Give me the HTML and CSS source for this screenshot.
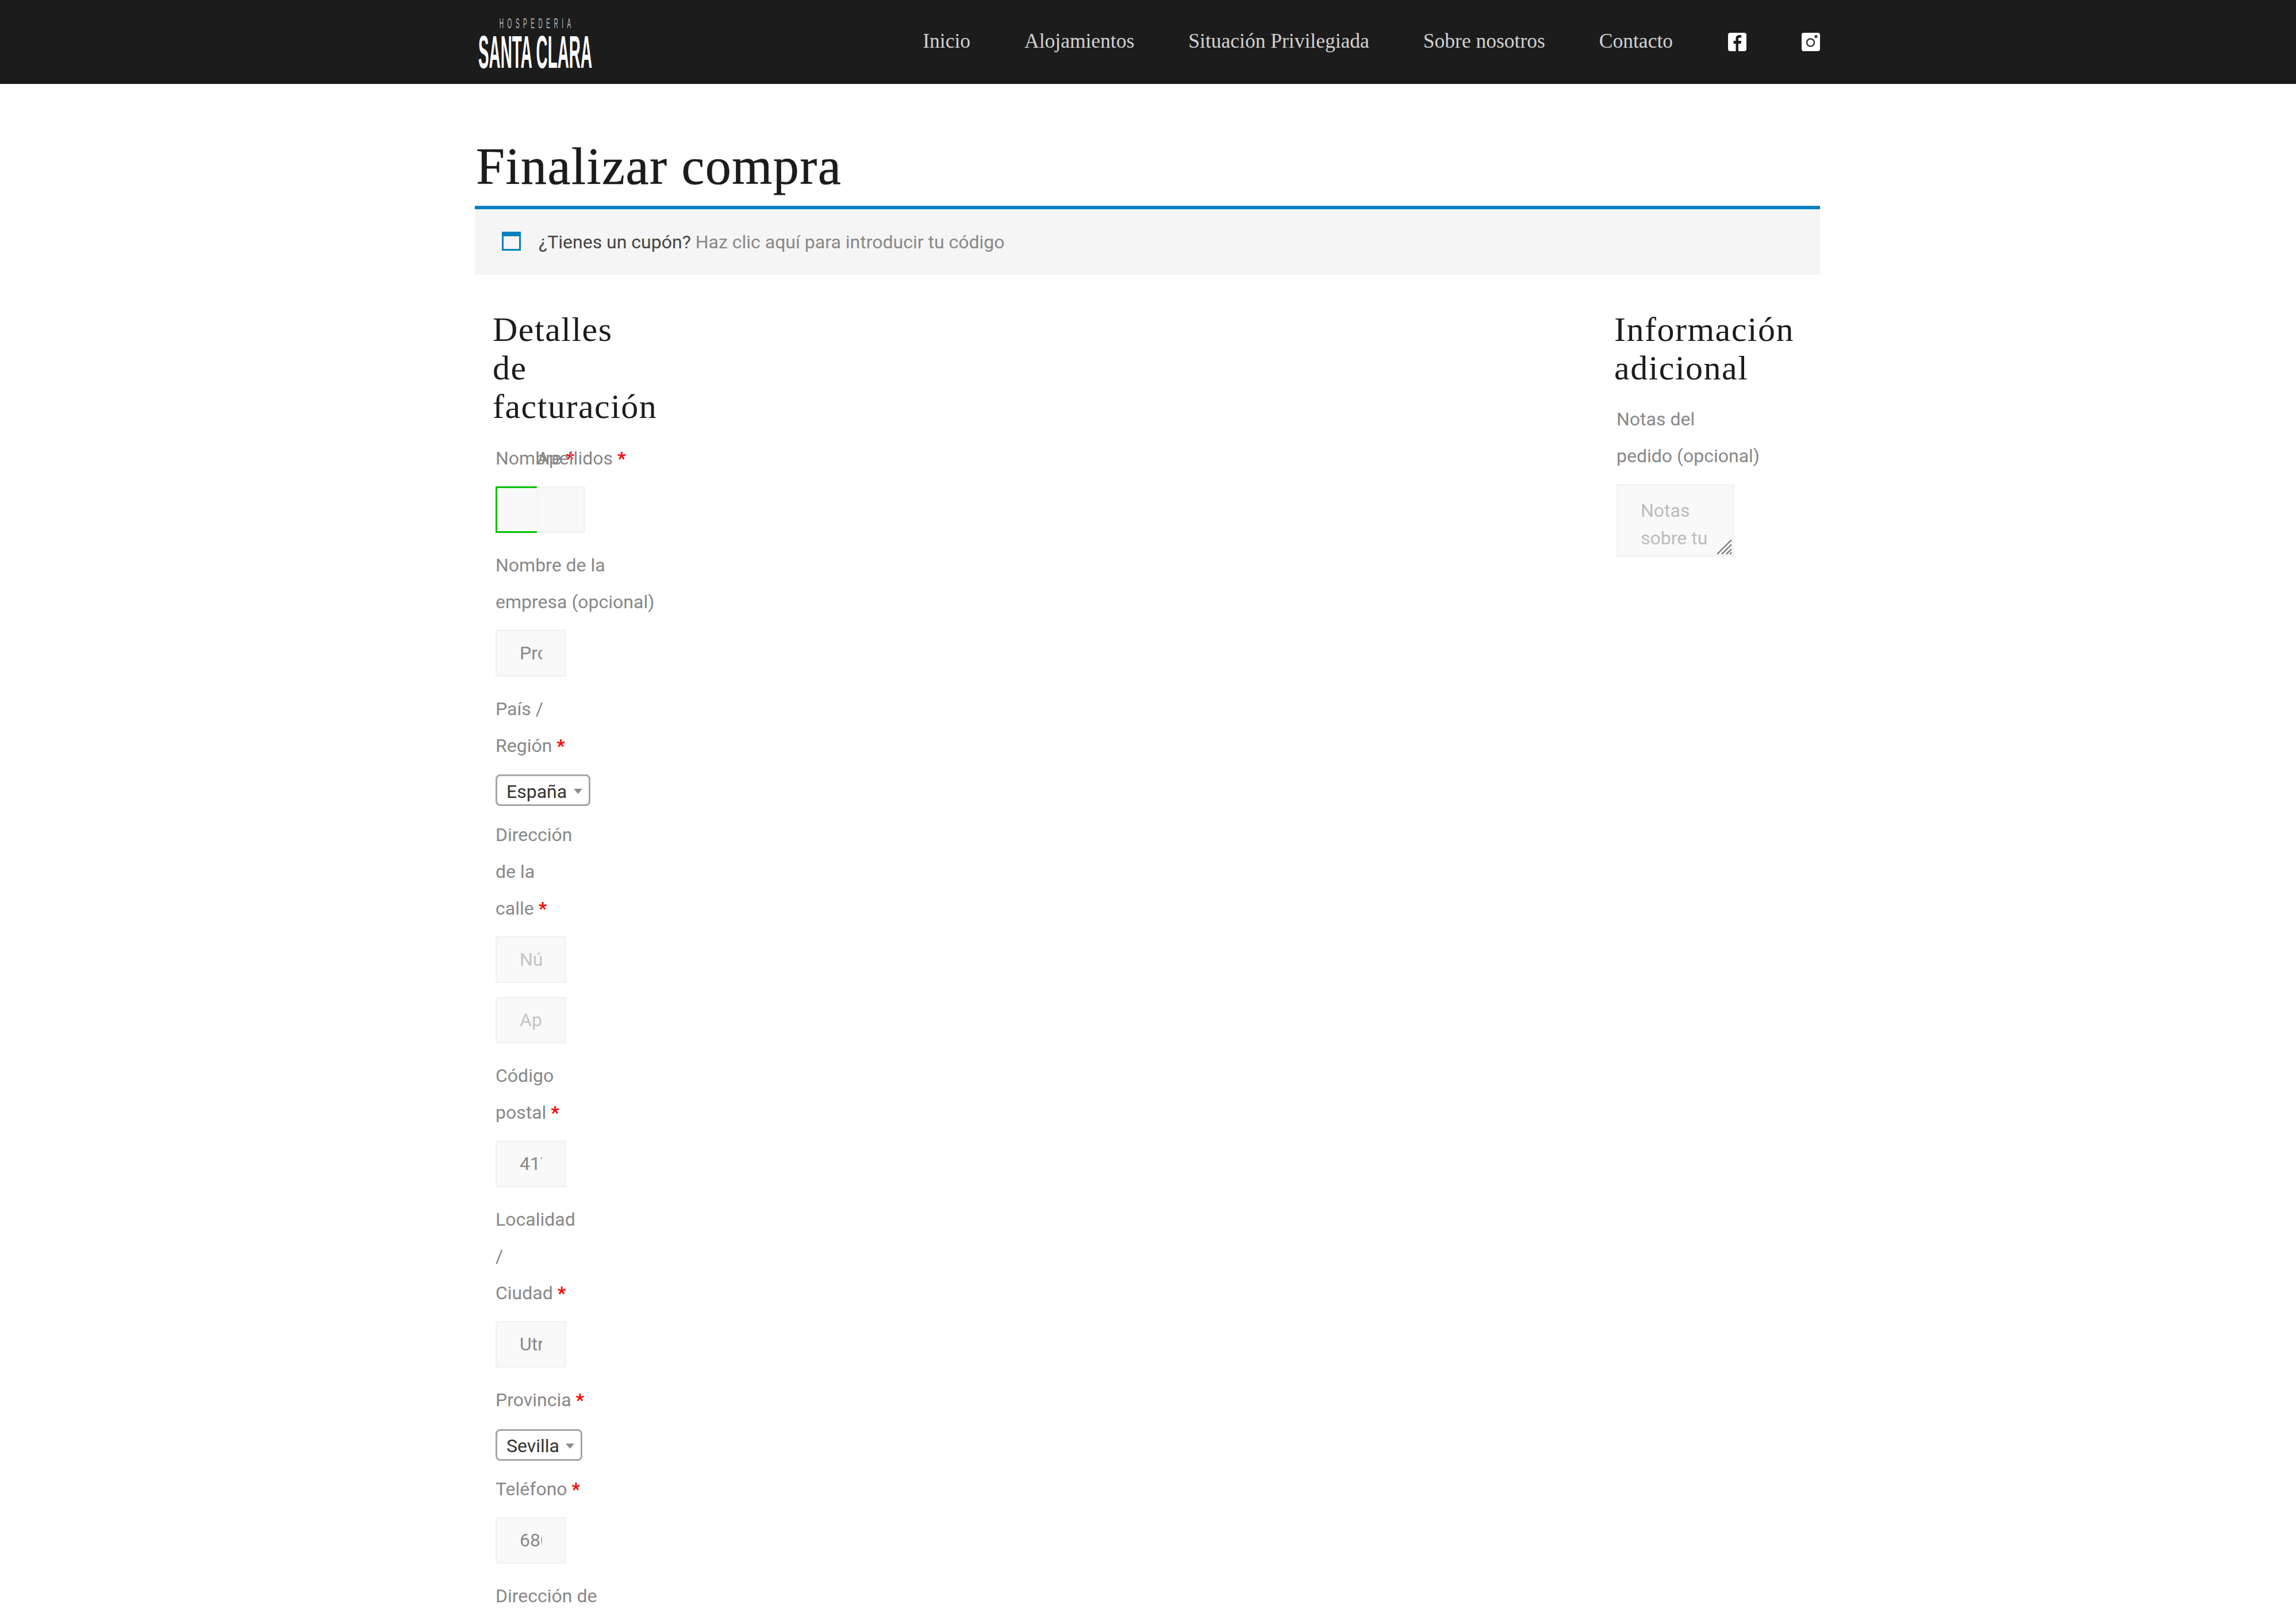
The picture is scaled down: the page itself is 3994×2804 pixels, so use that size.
FILE: index.html
```html
<!DOCTYPE html>
<html lang="es">
<head>
<meta charset="utf-8">
<title>Finalizar compra</title>
<link rel="stylesheet" href="styles.css">
</head>
<body>
<div class="page">
  <header class="topbar">
    <div class="wrap topbar-inner">
      <svg class="logo" width="210" height="90" viewBox="0 0 210 90" role="img" aria-label="Hospedería Santa Clara">
        <text class="logo-small" transform="scale(.42 1)" x="102" y="20" textLength="296" lengthAdjust="spacing">HOSPEDERIA</text>
        <text class="logo-big" x="6" y="89" textLength="198" lengthAdjust="spacingAndGlyphs">SANTA CLARA</text>
      </svg>
      <nav class="nav">
        <a class="nav-link">Inicio</a>
        <a class="nav-link">Alojamientos</a>
        <a class="nav-link">Situación Privilegiada</a>
        <a class="nav-link">Sobre nosotros</a>
        <a class="nav-link nav-link-last">Contacto</a>
        <svg class="social social-fb" width="32" height="32" viewBox="0 0 32 32" aria-label="Facebook"><rect width="32" height="32" rx="4" fill="#fff"/><path d="M18 32V19h4.400l.7-5H18v-3c0-1.500.6-2.400 2.500-2.400H23.200V4.200C22.400 4.100 21 4 19.600 4 16 4 13.500 6.200 13.500 10.300V14H9.500v5h4v13z" fill="#1c1c1c"/></svg>
        <svg class="social" width="32" height="32" viewBox="0 0 32 32" aria-label="Instagram"><rect width="32" height="32" rx="4" fill="#fff"/><circle cx="15.500" cy="17" r="6.500" fill="none" stroke="#3a3a3a" stroke-width="2.600"/><circle cx="25" cy="6.500" r="2.600" fill="#3a3a3a"/></svg>
      </nav>
    </div>
  </header>

  <main class="wrap">
    <h1 class="title">Finalizar compra</h1>
    <div class="notice">
      <span class="notice-icon"></span>
      <p class="notice-text">¿Tienes un cupón? <a class="notice-link">Haz clic aquí para introducir tu código</a></p>
    </div>

    <div class="columns">
      <section class="billing">
        <h2 class="section-title">Detalles<br>de<br>facturación</h2>

        <div class="name-row">
          <div class="field name-first">
            <label class="label nowrap">Nombre <abbr class="req">*</abbr></label>
            <input class="input input-valid" type="text">
          </div>
          <div class="field name-last">
            <label class="label nowrap">Apellidos <abbr class="req">*</abbr></label>
            <input class="input" type="text">
          </div>
        </div>

        <div class="field">
          <label class="label">Nombre de la<br>empresa (opcional)</label>
          <input class="input input-short" type="text" value="Proyecto">
        </div>

        <div class="field field-select">
          <label class="label label-select">País /<br>Región <abbr class="req">*</abbr></label>
          <div class="select select-country">España<svg class="caret" width="15" height="9" viewBox="0 0 15 9"><path d="M0 0h15L7.500 9z" fill="#8c8c8c"/></svg></div>
        </div>

        <div class="field">
          <label class="label">Dirección<br>de la<br>calle <abbr class="req">*</abbr></label>
          <input class="input input-short input-stack" type="text" placeholder="Número de la casa">
          <input class="input input-short" type="text" placeholder="Apartamento">
        </div>

        <div class="field">
          <label class="label">Código<br>postal <abbr class="req">*</abbr></label>
          <input class="input input-short" type="text" value="41710">
        </div>

        <div class="field">
          <label class="label">Localidad<br>/<br>Ciudad <abbr class="req">*</abbr></label>
          <input class="input input-short" type="text" value="Utrera">
        </div>

        <div class="field field-select">
          <label class="label label-select">Provincia <abbr class="req">*</abbr></label>
          <div class="select select-province">Sevilla<svg class="caret" width="15" height="9" viewBox="0 0 15 9"><path d="M0 0h15L7.500 9z" fill="#8c8c8c"/></svg></div>
        </div>

        <div class="field">
          <label class="label">Teléfono <abbr class="req">*</abbr></label>
          <input class="input input-short" type="text" value="680000000">
        </div>

        <div class="field">
          <label class="label">Dirección de</label>
        </div>
      </section>

      <section class="extra">
        <h2 class="section-title">Información<br>adicional</h2>
        <div class="field">
          <label class="label">Notas del<br>pedido (opcional)</label>
          <div class="textarea-wrap">
            <textarea class="textarea" placeholder="Notas sobre tu pedido, por ejemplo, notas especiales para la entrega."></textarea>
            <svg class="grip" width="27" height="27" viewBox="0 0 27 27"><path d="M1 26 26 1M9 26 26 9M17 26l9-9M23 26l3-3" stroke="#6e6e6e" stroke-width="2" fill="none"/></svg>
          </div>
        </div>
      </section>
    </div>
  </main>
</div>
</body>
</html>
```

FILE: styles.css
```css
* { box-sizing: border-box; }
html, body { margin: 0; padding: 0; background: #fff; }
.page { height: 2804px; overflow: hidden; font-family: Roboto, "Liberation Sans", sans-serif; font-size: 32px; color: #888; }
.wrap { width: 2340px; margin-left: 826px; }

.topbar { height: 146px; background: #1c1c1c; }
.topbar-inner { display: flex; align-items: center; justify-content: space-between; height: 146px; }
.logo { display: block; margin-top: 1px; overflow: visible; }
.logo-small { font-family: "Liberation Sans", sans-serif; font-size: 24px; fill: #bdbdbd; }
.logo-big { font-family: "Liberation Sans", sans-serif; font-weight: 700; font-size: 80px; fill: #fff; }
.nav { display: flex; align-items: center; gap: 94px; font-family: "Liberation Serif", serif; font-size: 35.500px; color: #d2d2d2; }
.nav-link { padding-bottom: 5px; }
.nav-link-last { margin-right: 2px; }
.social { display: block; }
.social-fb { margin-right: 2px; }

.title { margin: 94px 0 18px 2px; font-family: "Liberation Serif", serif; font-weight: 400; font-size: 90px; line-height: 100px; letter-spacing: 1.500px; color: #1c1c1c; -webkit-text-stroke: 0.6px #1c1c1c; }

.notice { display: flex; align-items: center; gap: 31px; height: 120px; padding-left: 47px; background: #f5f5f5; border-top: 6px solid #0080c0; }
.notice-icon { width: 33px; height: 33px; border: 3px solid #0080c0; border-top-width: 8px; margin-top: -3px; }
.notice-text { margin: 0; color: #444; }
.notice-link { color: #888; }

.columns { display: flex; justify-content: space-between; margin-top: 62px; }
.billing { width: 400px; }
.extra { width: 360px; padding-left: 2px; }
.section-title { margin: 0 0 23px; padding-left: 31px; font-family: "Liberation Serif", serif; font-weight: 400; font-size: 60px; line-height: 67px; letter-spacing: 1.500px; color: #1c1c1c; }
.billing .section-title { margin-bottom: 24px; }
.extra .section-title { padding-left: 0; }
.extra .field { padding-left: 4px; }

.field { padding-left: 36px; margin-bottom: 24px; }
.field-select { margin-bottom: 17.500px; }
.label { display: block; line-height: 64px; margin-bottom: 16.500px; color: #888; }
.label-select { margin-bottom: 18.500px; }
.nowrap { white-space: nowrap; }
.req { color: #f00; font-weight: 700; text-decoration: none; }

.name-row { display: flex; padding-left: 36px; margin-bottom: 23.500px; }
.name-first, .name-last { padding-left: 0; margin-bottom: 0; }
.name-first { width: 72px; }
.name-last { width: 84px; position: relative; }

.input { display: block; width: 100%; height: 81.500px; padding: 0 39px; border: 3px solid #f3f3f3; background: #f9f9f9; font: inherit; color: #888; outline: none; border-radius: 0; }
.input::placeholder { color: #c4c4c4; opacity: 1; }
.input-short { width: 123px; }
.input-stack { margin-bottom: 24px; }
.input-valid { width: 84px; border-color: #00c000; }

.select { display: flex; align-items: center; justify-content: space-between; height: 55px; padding: 4px 11px 0 16px; border: 3px solid #a6a6a6; border-radius: 8px; background: #fff; color: #333; }
.select-country { width: 165px; }
.select-province { width: 151px; }
.caret { display: block; }

.textarea-wrap { position: relative; width: 205px; height: 127px; }
.textarea { display: block; width: 205px; height: 127px; padding: 19px 20px 0 39px; border: 3px solid #f3f3f3; background: #f9f9f9; font: inherit; line-height: 48px; color: #888; resize: none; overflow: hidden; outline: none; border-radius: 0; }
.textarea::placeholder { color: #bdbdbd; opacity: 1; }
.grip { position: absolute; right: 4px; bottom: 4px; }
```
